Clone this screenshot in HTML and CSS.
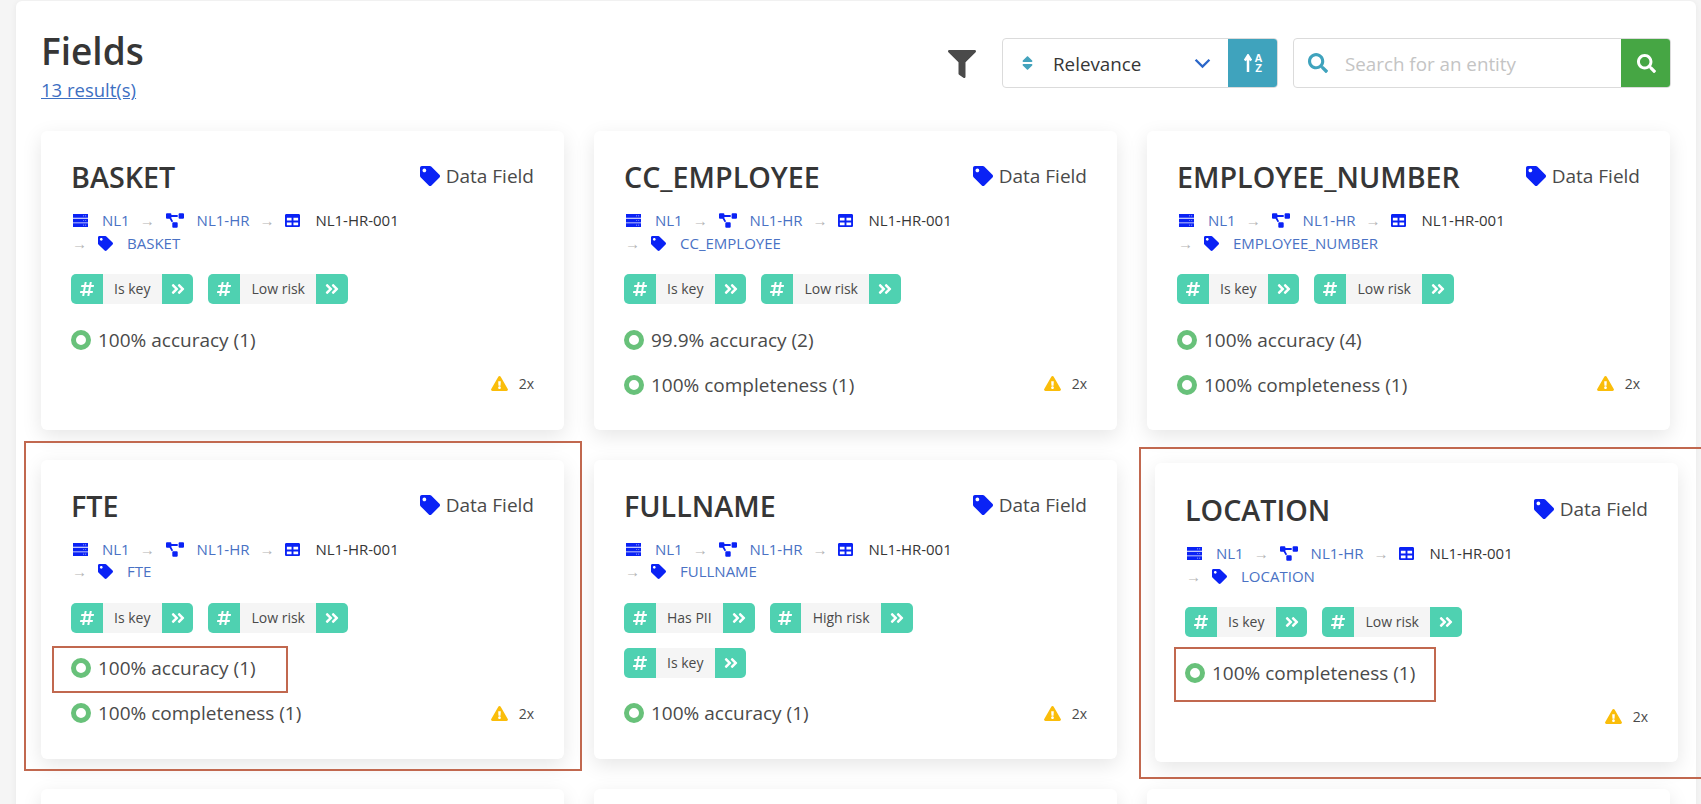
FILE: index.html
```html
<!DOCTYPE html>
<html lang="en">
<head>
    <meta charset="UTF-8">
    <meta name="viewport" content="width=device-width, initial-scale=1.0">
    <title>Fields</title>
    <link rel="stylesheet" href="styles.css">
</head>
<body>
    <!-- Icon sprite -->
    <svg class="sprite" xmlns="http://www.w3.org/2000/svg">
        <symbol id="i-tag" viewBox="0 0 512 512"><path d="M0 252.118V48C0 21.49 21.49 0 48 0h204.118a48 48 0 0 1 33.941 14.059l211.882 211.882c18.745 18.745 18.745 49.137 0 67.882L293.823 497.941c-18.745 18.745-49.137 18.745-67.882 0L14.059 286.059A48 48 0 0 1 0 252.118zM112 64c-26.51 0-48 21.49-48 48s21.49 48 48 48 48-21.49 48-48-21.49-48-48-48z"/></symbol>
        <symbol id="i-search" viewBox="0 0 512 512"><path d="M505 442.7L405.3 343c-4.5-4.5-10.6-7-17-7H372c27.6-35.3 44-79.7 44-128C416 93.1 322.9 0 208 0S0 93.1 0 208s93.1 208 208 208c48.3 0 92.7-16.4 128-44v16.3c0 6.4 2.5 12.5 7 17l99.7 99.7c9.4 9.4 24.6 9.4 33.9 0l28.3-28.3c9.4-9.4 9.4-24.6.1-34zM208 336c-70.7 0-128-57.2-128-128 0-70.7 57.2-128 128-128 70.7 0 128 57.2 128 128 0 70.7-57.2 128-128 128z"/></symbol>
        <symbol id="i-filter" viewBox="0 0 512 512"><path d="M487.976 0H24.028C2.71 0-8.047 25.866 7.058 40.971L192 225.941V432c0 7.831 3.821 15.17 10.237 19.662l80 55.98C298.02 518.69 320 507.493 320 487.98V225.941l184.947-184.97C520.021 25.896 509.338 0 487.976 0z"/></symbol>
        <symbol id="i-warn" viewBox="0 0 576 512"><path d="M569.517 440.013C587.975 472.007 564.806 512 527.94 512H48.054c-36.937 0-59.999-40.055-41.577-71.987L246.423 23.985c18.467-32.009 64.72-31.951 83.154 0l239.94 416.028zM288 354c-25.405 0-46 20.595-46 46s20.595 46 46 46 46-20.595 46-46-20.595-46-46-46zm-43.673-165.346l7.418 136c.347 6.364 5.609 11.346 11.982 11.346h48.546c6.373 0 11.635-4.982 11.982-11.346l7.418-136c.375-6.874-5.098-12.654-11.982-12.654h-63.383c-6.884 0-12.356 5.78-11.981 12.654z"/></symbol>
        <symbol id="i-server" viewBox="0 0 512 448"><path d="M0 0h512v128H0zM0 160h512v128H0zM0 320h512v128H0z" fill-rule="evenodd"/><path fill="#fff" d="M350 52h28v24h-28zM420 52h28v24h-28zM350 212h28v24h-28zM420 212h28v24h-28zM350 372h28v24h-28zM420 372h28v24h-28z"/></symbol>
        <symbol id="i-diagram" viewBox="0 0 640 512"><path d="M384 320H256c-17.67 0-32 14.33-32 32v128c0 17.67 14.33 32 32 32h128c17.67 0 32-14.33 32-32V352c0-17.67-14.33-32-32-32zM192 32c0-17.67-14.33-32-32-32H32C14.33 0 0 14.33 0 32v128c0 17.67 14.33 32 32 32h95.72l73.16 128.04C211.98 300.98 232.4 288 256 288h.28L192 175.51V128h224V64H192V32zM608 0H480c-17.67 0-32 14.33-32 32v128c0 17.67 14.33 32 32 32h128c17.67 0 32-14.33 32-32V32c0-17.67-14.33-32-32-32z"/></symbol>
        <symbol id="i-table" viewBox="0 32 512 448"><path d="M464 32H48C21.49 32 0 53.49 0 80v352c0 26.51 21.49 48 48 48h416c26.51 0 48-21.49 48-48V80c0-26.51-21.49-48-48-48zM224 416H64v-96h160v96zm0-160H64v-96h160v96zm224 160H288v-96h160v96zm0-160H288v-96h160v96z"/></symbol>
        <symbol id="i-hash" viewBox="0 0 448 512"><path d="M440.667 182.109l7.143-40c1.313-7.355-4.342-14.109-11.813-14.109h-74.81l14.623-81.891C377.123 38.754 371.468 32 363.997 32h-40.632a12 12 0 0 0-11.813 9.891L296.175 128H197.54l14.623-81.891C213.477 38.754 207.822 32 200.35 32h-40.632a12 12 0 0 0-11.813 9.891L132.528 128H53.432a12 12 0 0 0-11.813 9.891l-7.143 40C33.163 185.246 38.818 192 46.289 192h74.81L98.242 320H19.146a12 12 0 0 0-11.813 9.891l-7.143 40C-1.123 377.246 4.532 384 12.003 384h74.81L72.19 465.891C70.877 473.246 76.532 480 84.003 480h40.632a12 12 0 0 0 11.813-9.891L151.826 384h98.634l-14.623 81.891C234.523 473.246 240.178 480 247.65 480h40.632a12 12 0 0 0 11.813-9.891L315.472 384h79.096a12 12 0 0 0 11.813-9.891l7.143-40c1.313-7.355-4.342-14.109-11.813-14.109h-74.81l22.857-128h79.096a12 12 0 0 0 11.813-9.891zM261.889 320h-98.634l22.857-128h98.634l-22.857 128z"/></symbol>
        <symbol id="i-more" viewBox="0 0 448 512"><path d="M224.3 273l-136 136c-9.4 9.4-24.6 9.4-33.9 0l-22.6-22.6c-9.4-9.4-9.4-24.6 0-33.9l96.4-96.4-96.4-96.4c-9.4-9.4-9.4-24.6 0-33.9L54.3 103c9.4-9.4 24.6-9.4 33.9 0l136 136c9.5 9.4 9.5 24.6.1 34zm192-34l-136-136c-9.4-9.4-24.6-9.4-33.9 0l-22.6 22.6c-9.4 9.4-9.4 24.6 0 33.9l96.4 96.4-96.4 96.4c-9.4 9.4-9.4 24.6 0 33.9l22.6 22.6c9.4 9.4 24.6 9.4 33.9 0l136-136c9.4-9.2 9.4-24.4 0-33.8z"/></symbol>
        <symbol id="i-sort" viewBox="0 0 320 512"><path d="M41 288h238c21.4 0 32.1 25.9 17 41L177 448c-9.4 9.4-24.6 9.4-33.9 0L24 329c-15.1-15.1-4.4-41 17-41zm255-105L177 64c-9.4-9.4-24.6-9.4-33.9 0L24 183c-15.1 15.1-4.4 41 17 41h238c21.4 0 32.1-25.9 17-41z"/></symbol>
    </svg>

    <main class="panel">
        <header class="page-head">
            <div>
                <h1 class="page-title">Fields</h1>
                <a class="result-count" href="#">13 result(s)</a>
            </div>
            <div class="toolbar">
                <svg class="filter-icon"><use href="#i-filter"/></svg>
                <div class="sort-box">
                    <div class="sort-select">
                        <svg class="sort-icon"><use href="#i-sort"/></svg>
                        <span class="sort-value">Relevance</span>
                        <svg class="chevron" viewBox="0 0 16 10"><path d="M1.5 1.5 8 8l6.500-6.500" fill="none" stroke="currentColor" stroke-width="2.200"/></svg>
                    </div>
                    <button class="sort-button" type="button">
                        <svg class="sort-arrow" viewBox="0 0 8 18"><path d="M4 18V3M.8 6.500 4 1.500l3.200 5" fill="none" stroke="#fff" stroke-width="2.500"/></svg>
                        <span class="sort-letters"><span>A</span><span>Z</span></span>
                    </button>
                </div>
                <div class="search-box">
                    <svg class="search-icon"><use href="#i-search"/></svg>
                    <input class="search-input" type="text" placeholder="Search for an entity">
                    <button class="search-button" type="button"><svg><use href="#i-search"/></svg></button>
                </div>
            </div>
        </header>

        <section class="card-grid">
            <article class="card">
                <div class="card-head"><h2 class="card-title">BASKET</h2><span class="card-type"><svg><use href="#i-tag"/></svg>Data Field</span></div>
                <div class="crumbs">
                    <span class="crumb"><svg><use href="#i-server"/></svg><a href="#">NL1</a></span><span class="arrow">→</span>
                    <span class="crumb"><svg class="wide"><use href="#i-diagram"/></svg><a href="#">NL1-HR</a></span><span class="arrow">→</span>
                    <span class="crumb"><svg class="table"><use href="#i-table"/></svg>NL1-HR-001</span><br>
                    <span class="arrow first">→</span><span class="crumb"><svg><use href="#i-tag"/></svg><a href="#">BASKET</a></span>
                </div>
                <div class="tags">
                    <span class="tag"><span class="tag-end"><svg><use href="#i-hash"/></svg></span><span class="tag-label">Is key</span><span class="tag-end"><svg><use href="#i-more"/></svg></span></span>
                    <span class="tag"><span class="tag-end"><svg><use href="#i-hash"/></svg></span><span class="tag-label">Low risk</span><span class="tag-end"><svg><use href="#i-more"/></svg></span></span>
                </div>
                <div class="card-foot">
                    <ul class="scores"><li class="score"><span class="ring"></span>100% accuracy (1)</li></ul>
                    <span class="warning"><svg><use href="#i-warn"/></svg>2x</span>
                </div>
            </article>

            <article class="card">
                <div class="card-head"><h2 class="card-title">CC_EMPLOYEE</h2><span class="card-type"><svg><use href="#i-tag"/></svg>Data Field</span></div>
                <div class="crumbs">
                    <span class="crumb"><svg><use href="#i-server"/></svg><a href="#">NL1</a></span><span class="arrow">→</span>
                    <span class="crumb"><svg class="wide"><use href="#i-diagram"/></svg><a href="#">NL1-HR</a></span><span class="arrow">→</span>
                    <span class="crumb"><svg class="table"><use href="#i-table"/></svg>NL1-HR-001</span><br>
                    <span class="arrow first">→</span><span class="crumb"><svg><use href="#i-tag"/></svg><a href="#">CC_EMPLOYEE</a></span>
                </div>
                <div class="tags">
                    <span class="tag"><span class="tag-end"><svg><use href="#i-hash"/></svg></span><span class="tag-label">Is key</span><span class="tag-end"><svg><use href="#i-more"/></svg></span></span>
                    <span class="tag"><span class="tag-end"><svg><use href="#i-hash"/></svg></span><span class="tag-label">Low risk</span><span class="tag-end"><svg><use href="#i-more"/></svg></span></span>
                </div>
                <div class="card-foot">
                    <ul class="scores"><li class="score"><span class="ring"></span>99.9% accuracy (2)</li><li class="score"><span class="ring"></span>100% completeness (1)</li></ul>
                    <span class="warning"><svg><use href="#i-warn"/></svg>2x</span>
                </div>
            </article>

            <article class="card">
                <div class="card-head"><h2 class="card-title">EMPLOYEE_NUMBER</h2><span class="card-type"><svg><use href="#i-tag"/></svg>Data Field</span></div>
                <div class="crumbs">
                    <span class="crumb"><svg><use href="#i-server"/></svg><a href="#">NL1</a></span><span class="arrow">→</span>
                    <span class="crumb"><svg class="wide"><use href="#i-diagram"/></svg><a href="#">NL1-HR</a></span><span class="arrow">→</span>
                    <span class="crumb"><svg class="table"><use href="#i-table"/></svg>NL1-HR-001</span><br>
                    <span class="arrow first">→</span><span class="crumb"><svg><use href="#i-tag"/></svg><a href="#">EMPLOYEE_NUMBER</a></span>
                </div>
                <div class="tags">
                    <span class="tag"><span class="tag-end"><svg><use href="#i-hash"/></svg></span><span class="tag-label">Is key</span><span class="tag-end"><svg><use href="#i-more"/></svg></span></span>
                    <span class="tag"><span class="tag-end"><svg><use href="#i-hash"/></svg></span><span class="tag-label">Low risk</span><span class="tag-end"><svg><use href="#i-more"/></svg></span></span>
                </div>
                <div class="card-foot">
                    <ul class="scores"><li class="score"><span class="ring"></span>100% accuracy (4)</li><li class="score"><span class="ring"></span>100% completeness (1)</li></ul>
                    <span class="warning"><svg><use href="#i-warn"/></svg>2x</span>
                </div>
            </article>

            <article class="card">
                <div class="card-head"><h2 class="card-title">FTE</h2><span class="card-type"><svg><use href="#i-tag"/></svg>Data Field</span></div>
                <div class="crumbs">
                    <span class="crumb"><svg><use href="#i-server"/></svg><a href="#">NL1</a></span><span class="arrow">→</span>
                    <span class="crumb"><svg class="wide"><use href="#i-diagram"/></svg><a href="#">NL1-HR</a></span><span class="arrow">→</span>
                    <span class="crumb"><svg class="table"><use href="#i-table"/></svg>NL1-HR-001</span><br>
                    <span class="arrow first">→</span><span class="crumb"><svg><use href="#i-tag"/></svg><a href="#">FTE</a></span>
                </div>
                <div class="tags">
                    <span class="tag"><span class="tag-end"><svg><use href="#i-hash"/></svg></span><span class="tag-label">Is key</span><span class="tag-end"><svg><use href="#i-more"/></svg></span></span>
                    <span class="tag"><span class="tag-end"><svg><use href="#i-hash"/></svg></span><span class="tag-label">Low risk</span><span class="tag-end"><svg><use href="#i-more"/></svg></span></span>
                </div>
                <div class="card-foot">
                    <ul class="scores"><li class="score"><span class="ring"></span>100% accuracy (1)</li><li class="score"><span class="ring"></span>100% completeness (1)</li></ul>
                    <span class="warning"><svg><use href="#i-warn"/></svg>2x</span>
                </div>
            </article>

            <article class="card">
                <div class="card-head"><h2 class="card-title">FULLNAME</h2><span class="card-type"><svg><use href="#i-tag"/></svg>Data Field</span></div>
                <div class="crumbs">
                    <span class="crumb"><svg><use href="#i-server"/></svg><a href="#">NL1</a></span><span class="arrow">→</span>
                    <span class="crumb"><svg class="wide"><use href="#i-diagram"/></svg><a href="#">NL1-HR</a></span><span class="arrow">→</span>
                    <span class="crumb"><svg class="table"><use href="#i-table"/></svg>NL1-HR-001</span><br>
                    <span class="arrow first">→</span><span class="crumb"><svg><use href="#i-tag"/></svg><a href="#">FULLNAME</a></span>
                </div>
                <div class="tags">
                    <span class="tag"><span class="tag-end"><svg><use href="#i-hash"/></svg></span><span class="tag-label">Has PII</span><span class="tag-end"><svg><use href="#i-more"/></svg></span></span>
                    <span class="tag"><span class="tag-end"><svg><use href="#i-hash"/></svg></span><span class="tag-label">High risk</span><span class="tag-end"><svg><use href="#i-more"/></svg></span></span>
                    <span class="tag"><span class="tag-end"><svg><use href="#i-hash"/></svg></span><span class="tag-label">Is key</span><span class="tag-end"><svg><use href="#i-more"/></svg></span></span>
                </div>
                <div class="card-foot">
                    <ul class="scores"><li class="score"><span class="ring"></span>100% accuracy (1)</li></ul>
                    <span class="warning"><svg><use href="#i-warn"/></svg>2x</span>
                </div>
            </article>

            <!-- empty slot, the LOCATION card sits pasted over it -->
            <article class="card card-blank"></article>

            <article class="card card-next"></article>
            <article class="card card-next"></article>
            <article class="card card-next"></article>
        </section>
    </main>

    <!-- Pasted card and markup boxes lying on top of the page -->
    <article class="card card-pasted">
        <div class="card-head"><h2 class="card-title">LOCATION</h2><span class="card-type"><svg><use href="#i-tag"/></svg>Data Field</span></div>
        <div class="crumbs">
            <span class="crumb"><svg><use href="#i-server"/></svg><a href="#">NL1</a></span><span class="arrow">→</span>
            <span class="crumb"><svg class="wide"><use href="#i-diagram"/></svg><a href="#">NL1-HR</a></span><span class="arrow">→</span>
            <span class="crumb"><svg class="table"><use href="#i-table"/></svg>NL1-HR-001</span><br>
            <span class="arrow first">→</span><span class="crumb"><svg><use href="#i-tag"/></svg><a href="#">LOCATION</a></span>
        </div>
        <div class="tags">
            <span class="tag"><span class="tag-end"><svg><use href="#i-hash"/></svg></span><span class="tag-label">Is key</span><span class="tag-end"><svg><use href="#i-more"/></svg></span></span>
            <span class="tag"><span class="tag-end"><svg><use href="#i-hash"/></svg></span><span class="tag-label">Low risk</span><span class="tag-end"><svg><use href="#i-more"/></svg></span></span>
        </div>
        <div class="card-foot">
            <ul class="scores"><li class="score"><span class="ring"></span>100% completeness (1)</li></ul>
            <span class="warning"><svg><use href="#i-warn"/></svg>2x</span>
        </div>
    </article>
    <div class="mark mark-fte"></div>
    <div class="mark mark-accuracy"></div>
    <div class="mark mark-location"></div>
    <div class="mark mark-completeness"></div>
</body>
</html>
```

FILE: styles.css
```css
/* Page */
html, body {
    height: 804px;
    overflow: hidden;
}

body {
    position: relative;
    margin: 0;
    padding: 1px 5px 0 16px;
    background-color: #f5f5f5;
    color: #4a4a4a;
    font-family: "Open Sans", "Noto Sans", sans-serif;
    font-size: 19px;
}

.sprite {
    display: none;
}

.panel {
    height: 803px;
    overflow: hidden;
    padding: 24px 25px 0 25px;
    background-color: #fff;
    border-radius: 6px;
    box-shadow: 0 1px 6px rgba(0, 0, 0, 0.06);
}

/* Header */
.page-head {
    display: flex;
    justify-content: space-between;
    height: 106px;
}

.page-title {
    margin: 0;
    color: #363636;
    font-size: 37px;
    font-weight: 600;
    line-height: 51px;
}

.result-count {
    display: block;
    color: #3d6fc2;
    font-size: 18.5px;
    line-height: 24px;
    margin-top: 2px;
}

.toolbar {
    display: flex;
    align-items: flex-start;
    padding-top: 13px;
}

.filter-icon {
    width: 28px;
    height: 28px;
    margin: 12px 26px 0 0;
    fill: #4a4a4a;
}

.sort-box, .search-box {
    display: flex;
    height: 50px;
    box-sizing: border-box;
    border: 1px solid #dbdbdb;
    border-radius: 4px;
    overflow: hidden;
}

.sort-box {
    width: 276px;
    margin-right: 15px;
}

.sort-select {
    flex: 1;
    display: flex;
    align-items: center;
    padding: 0 17px 0 19px;
}

.sort-icon {
    width: 11px;
    height: 18px;
    fill: #44a3bd;
}

.sort-value {
    flex: 1;
    margin-left: 20px;
    padding-top: 1px;
    color: #363636;
    font-size: 18.8px;
}

.chevron {
    width: 17px;
    height: 11px;
    color: #2a66c9;
}

.sort-button {
    display: flex;
    align-items: center;
    justify-content: center;
    gap: 3px;
    width: 50px;
    margin: -1px -1px -1px 0;
    padding: 0;
    border: none;
    background-color: #3fa3bd;
}

.sort-arrow {
    width: 8px;
    height: 18px;
}

.sort-letters {
    display: flex;
    flex-direction: column;
    color: #fff;
    font-size: 11px;
    font-weight: 800;
    line-height: 10px;
}

.search-box {
    width: 378px;
    align-items: center;
}

.search-icon {
    width: 20px;
    height: 20px;
    margin: 0 15px 0 14px;
    fill: #3fa3bd;
    flex: none;
}

.search-input {
    flex: 1;
    min-width: 0;
    padding-top: 3px;
    border: none;
    outline: none;
    color: #363636;
    font-family: inherit;
    font-size: 18.8px;
}

.search-input::placeholder {
    color: #c4c4c4;
}

.search-button {
    display: flex;
    align-items: center;
    justify-content: center;
    width: 50px;
    height: 50px;
    margin-right: -1px;
    padding: 0;
    border: none;
    background-color: #46a644;
    flex: none;
}

.search-button svg {
    width: 19px;
    height: 19px;
    fill: #fff;
}

/* Cards */
.card-grid {
    display: grid;
    grid-template-columns: repeat(3, 523px);
    gap: 30px;
}

.card {
    display: flex;
    flex-direction: column;
    box-sizing: border-box;
    padding: 30px 30px 22.5px;
    background-color: #fff;
    border-radius: 6px;
    box-shadow: 0 6px 20px rgba(0, 0, 0, 0.1);
}

.card-next {
    height: 298px;
}

.card-pasted {
    position: absolute;
    left: 1155px;
    top: 463px;
    width: 523px;
    height: 299px;
    padding-top: 31px;
}

.card-blank {
    visibility: hidden;
}

.card-head {
    display: flex;
    justify-content: space-between;
    height: 34px;
}

.card-title {
    margin: 0;
    color: #363636;
    font-size: 28.7px;
    font-weight: 600;
    line-height: 31px;
}

.card-type {
    display: flex;
    align-items: center;
    height: 30px;
}

.card-type svg {
    width: 20px;
    height: 20px;
    margin-right: 6px;
    fill: #0a22f5;
}

.crumbs {
    height: 46px;
    margin-top: 14px;
    color: #363636;
    font-size: 15px;
    line-height: 22.5px;
}

.crumbs a {
    color: #4a72c4;
    text-decoration: none;
}

.crumb svg {
    width: 15px;
    height: 15px;
    margin: 0 14px 0 2px;
    vertical-align: -2px;
    fill: #0a22f5;
}

.crumb svg.wide {
    width: 18px;
    margin-right: 13px;
}

.crumb svg.table {
    margin-right: 15px;
}

.arrow {
    margin: 0 5px 0 10px;
    color: #b5b5b5;
    font-family: "Liberation Sans", sans-serif;
    font-size: 15px;
    line-height: 1;
}

.arrow.first {
    margin: 0 9px 0 1px;
}

.tags {
    display: flex;
    flex-wrap: wrap;
    gap: 15px;
    max-width: 400px;
    margin-top: 19px;
}

.tag {
    display: flex;
    height: 30px;
    border-radius: 5px;
    overflow: hidden;
    font-size: 14px;
    line-height: 30px;
}

.tag-end {
    display: flex;
    align-items: center;
    justify-content: center;
    width: 31.5px;
    background-color: #4fd1b1;
}

.tag-end svg {
    width: 14px;
    height: 16px;
    fill: #fff;
}

.tag-label {
    padding: 0 11.5px;
    background-color: #f5f5f5;
}

.card-foot {
    flex: 1;
    display: flex;
    justify-content: space-between;
    align-items: flex-end;
    margin-top: 13px;
}

.scores {
    align-self: flex-start;
    margin: 0;
    padding: 0;
    list-style: none;
}

.score {
    display: flex;
    align-items: center;
    height: 45px;
}

.ring {
    width: 20px;
    height: 20px;
    box-sizing: border-box;
    margin-right: 7px;
    border: 5px solid #68c17a;
    border-radius: 50%;
}

.warning {
    display: flex;
    align-items: center;
    height: 45px;
    margin-bottom: 1px;
    font-size: 14px;
}

.warning svg {
    width: 17px;
    height: 15px;
    margin-right: 11px;
    fill: #fabd0a;
}

/* Markup boxes */
.mark {
    position: absolute;
    box-sizing: border-box;
    border: 2px solid #c1684f;
}

.mark-fte {
    left: 24px;
    top: 441px;
    width: 558px;
    height: 330px;
}

.mark-accuracy {
    left: 52px;
    top: 646px;
    width: 236px;
    height: 47px;
}

.mark-location {
    left: 1139px;
    top: 447px;
    width: 580px;
    height: 332px;
}

.mark-completeness {
    left: 1174px;
    top: 647px;
    width: 262px;
    height: 55px;
}
```
